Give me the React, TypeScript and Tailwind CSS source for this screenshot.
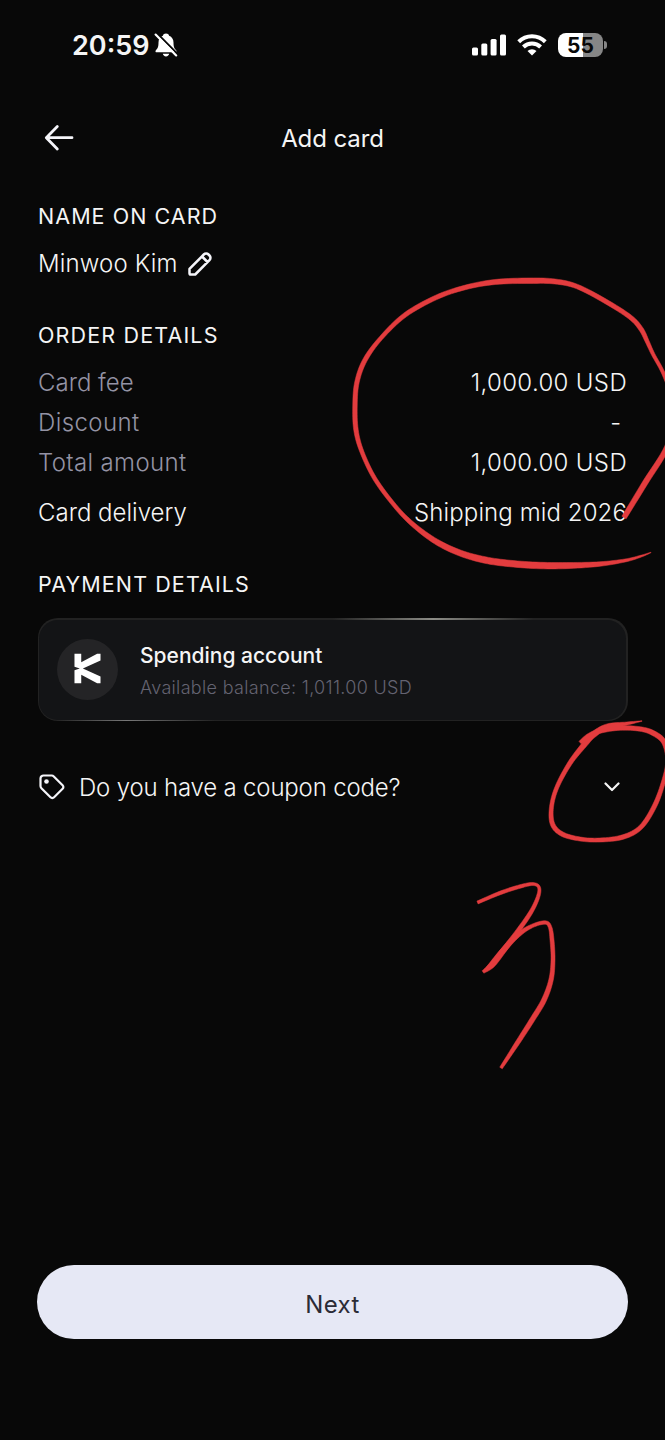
import { useMemo } from "react";

type Point = [x: number, y: number, width: number];

const ORDER_CIRCLE: Point[] = [
    [651, 552.5, 0.5], [640, 556.5, 2], [625, 560.5, 3], [600, 564, 4.5], [570, 565.5, 6], [540, 565.5, 6.5],
    [510, 563.5, 6.5], [485, 560, 6.5], [460, 553, 6], [436, 541.5, 5.5], [413, 524.5, 4.5], [395, 506, 4],
    [375, 479, 4], [362, 452, 4], [356, 430, 4.5], [355, 405, 4.5], [357, 382, 4.5], [365, 360, 4.5],
    [381, 338, 4], [405, 315, 4.5], [436, 297.5, 4.5], [465, 287.5, 4.5], [495, 282, 5], [530, 280.7, 5.5],
    [555, 281.5, 5], [577, 286.5, 4.5], [605, 301, 4.5], [630, 317, 4.5], [641, 329, 4.5], [647, 341, 4],
    [653, 354, 3.5], [665, 377, 3.5], [676, 412, 4], [667, 447, 5], [645, 483, 5.5], [624, 517.5, 5],
];

const CHEVRON_CIRCLE: Point[] = [
    [642, 721, 0.5], [627, 723.5, 3], [607, 726.5, 5], [593, 735, 6], [584, 745, 5.5], [570, 763, 4.5],
    [557, 787, 4], [551.5, 807, 4], [552.5, 824, 4.5], [562, 834, 4.5], [580, 839, 4], [600, 840, 4],
    [623, 837, 4.5], [641, 827, 4.5], [655, 805, 4.5], [664, 780, 4], [668, 760, 4.5], [664, 742, 5],
    [653, 733, 5], [640, 729, 4.5], [620, 728, 4.5], [600, 731, 4.5], [588, 736, 4], [580, 742.5, 3],
];

const THREE_TOP: Point[] = [
    [477.5, 902.5, 3], [500, 893, 3.5], [520, 886.5, 3.5], [533, 884, 3], [539, 887.5, 3], [538, 897, 3.5],
    [531, 912, 4], [518, 931, 4.5], [503, 951, 5.5], [492, 965, 5.5], [483, 972, 3],
];

const THREE_BOTTOM: Point[] = [
    [486, 970, 3], [502, 951.5, 5], [518, 935, 4.5], [532, 926, 3.5], [545, 922.5, 3.5], [550, 927, 3.5],
    [552, 940, 4], [553, 960, 4], [551, 980, 4.5], [544, 1000, 5], [533, 1018.5, 5], [518, 1042, 4.5], [501, 1068, 3],
];

// Catmull-Rom through the points, offset on both sides by half the width
function inkPath(points: Point[]) {
    const samples: Point[] = [];
    const steps = 8;
    for (let i = 0; i < points.length - 1; i++) {
        const p0 = points[Math.max(i - 1, 0)];
        const p1 = points[i];
        const p2 = points[i + 1];
        const p3 = points[Math.min(i + 2, points.length - 1)];
        for (let s = 0; s < steps; s++) {
            const t = s / steps;
            samples.push(
                [0, 1, 2].map(
                    (k) =>
                        0.5 *
                        (2 * p1[k] +
                            (p2[k] - p0[k]) * t +
                            (2 * p0[k] - 5 * p1[k] + 4 * p2[k] - p3[k]) * t * t +
                            (3 * p1[k] - p0[k] - 3 * p2[k] + p3[k]) * t * t * t),
                ) as Point,
            );
        }
    }
    samples.push(points[points.length - 1]);

    const left: string[] = [];
    const right: string[] = [];
    samples.forEach(([x, y, w], i) => {
        const a = samples[Math.max(i - 1, 0)];
        const b = samples[Math.min(i + 1, samples.length - 1)];
        const len = Math.hypot(b[0] - a[0], b[1] - a[1]) || 1;
        const nx = ((a[1] - b[1]) / len) * (w / 2);
        const ny = ((b[0] - a[0]) / len) * (w / 2);
        left.push(`${(x + nx).toFixed(2)} ${(y + ny).toFixed(2)}`);
        right.unshift(`${(x - nx).toFixed(2)} ${(y - ny).toFixed(2)}`);
    });
    return `M${[...left, ...right].join("L")}Z`;
}

function Ink({ points }: { points: Point[] }) {
    const d = useMemo(() => inkPath(points), [points]);
    return <path d={d} fill="#e33c3e" stroke="#e33c3e" strokeWidth="0.5" strokeLinejoin="round" />;
}

function StatusBar() {
    return (
        <div className="flex h-[90px] items-center justify-between pl-[72px] pr-[58px]">
            <div className="flex items-center gap-1">
                <span className="w-[78px] pt-0.5 text-[27px] leading-8 font-semibold tracking-[0px] whitespace-nowrap">20:59</span>
                <svg className="h-[26px] w-6" viewBox="0 0 24 26" fill="none">
                    <path
                        d="M12 1.5c-1.6 0-2.8.9-3.1 2.2C6 4.9 4.5 7.3 4.5 10.5c0 4.7-.9 6-2.6 7.7-.8.8-.6 2.1.9 2.1h18.4c1.5 0 1.7-1.3.9-2.1-1.7-1.7-2.6-3-2.6-7.7 0-3.2-1.5-5.6-4.4-6.8C14.8 2.4 13.6 1.500 12 1.500z"
                        fill="#fff"
                    />
                    <path d="M8.8 21.8h6.4c-.3 1.5-1.5 2.6-3.2 2.6s-2.9-1.1-3.2-2.600z" fill="#fff" />
                    <path d="M3.2 1.500l20.500 20.500" stroke="#080808" strokeWidth="2" />
                    <path d="M1.600 2.600l20.600 20.800" stroke="#fff" strokeWidth="2.200" strokeLinecap="round" />
                </svg>
            </div>
            <div className="flex items-center">
                <svg className="h-[22px] w-[34px]" viewBox="0 0 34 22" fill="#fff">
                    <rect x="0" y="13.5" width="6" height="8" rx="1.5" />
                    <rect x="9.3" y="9.5" width="6" height="12" rx="1.5" />
                    <rect x="18.6" y="5" width="6" height="16.5" rx="1.5" />
                    <rect x="28" y="0.5" width="6" height="21" rx="1.5" />
                </svg>
                <svg className="ml-[11px] h-[22px] w-[30px]" viewBox="0 0 30 22" fill="none" stroke="#fff">
                    <path d="M1.700 7.700a19 19 0 0 1 26.600 0" strokeWidth="4" />
                    <path d="M6.400 13a12.300 12.300 0 0 1 17.200 0" strokeWidth="4" />
                    <path d="M15 21.500l-4.500-4.500a6.400 6.400 0 0 1 9 0z" fill="#fff" stroke="none" />
                </svg>
                <div className="ml-[11px] flex h-6 w-[45px] items-center justify-center rounded-[8px] bg-linear-to-r from-white from-55% to-[#868686] to-55% pt-px text-[21px] leading-6 font-bold text-[#080808]">
                    55
                </div>
                <div className="ml-px h-2 w-[3px] rounded-r-full bg-[#868686]" />
            </div>
        </div>
    );
}

function OrderRow({ label, value }: { label: string; value: string }) {
    return (
        <div className="flex h-10 items-center justify-between">
            <span className="text-[#9493a4]">{label}</span>
            <span className="tracking-[0.35px]">{value}</span>
        </div>
    );
}

export default function App() {
    return (
        <div className="relative flex h-[1440px] w-[665px] flex-col overflow-hidden bg-[#080808] font-['Inter','Liberation_Sans',sans-serif] text-[#f5f5f5]">
            <StatusBar />
            <header className="grid h-24 grid-cols-3 items-center px-11">
                <svg className="h-7 w-[30px]" viewBox="0 0 30 28" fill="none" stroke="#f5f5fa" strokeWidth="2.8" strokeLinecap="round" strokeLinejoin="round">
                    <path d="M28 13.700H2.500M13.300 2.500L2.300 13.700l11 11.200" />
                </svg>
                <h1 className="pt-0.5 text-center text-[24px] tracking-[-0.1px]">Add card</h1>
            </header>

            <main className="flex flex-col px-[38px] pt-3.5 text-[24px] font-light">
                <h2 className="h-8 text-[21.5px] leading-8 font-normal tracking-[1.05px]">NAME ON CARD</h2>
                <div className="mt-3 flex h-10 items-center gap-2.5">
                    <span className="tracking-[0.15px]">Minwoo Kim</span>
                    <svg className="mb-px h-6 w-6" viewBox="0 0 24 24" fill="none" stroke="#f5f5fa" strokeWidth="2.5" strokeLinejoin="round">
                        <path d="M1.500 16.800L15.800 2.500a3.300 3.300 0 0 1 4.700 0l1 1a3.300 3.300 0 0 1 0 4.700L7.200 22.500H2.800a1.300 1.300 0 0 1-1.300-1.300zM14 4.500l5.500 5.500" />
                    </svg>
                </div>

                <h2 className="mt-[35px] h-8 text-[21.5px] leading-8 font-normal tracking-[1.15px]">ORDER DETAILS</h2>
                <div className="mt-3">
                    <OrderRow label="Card fee" value="1,000.00 USD" />
                    <div className="flex h-10 items-center justify-between">
                        <span className="tracking-[0.4px] text-[#9493a4]">Discount</span>
                        <span className="pr-1.5">-</span>
                    </div>
                    <div className="flex h-10 items-center justify-between tracking-[0.35px]">
                        <span className="text-[#9493a4]">Total amount</span>
                        <span>1,000.00 USD</span>
                    </div>
                </div>
                <div className="mt-2.5 flex h-10 items-center justify-between">
                    <span>Card delivery</span>
                    <span className="tracking-[0.1px]">Shipping mid 2026</span>
                </div>

                <h2 className="mt-[35px] h-8 text-[21.5px] leading-8 font-normal tracking-[1.1px]">PAYMENT DETAILS</h2>
                {/* The outer box is the glowing edge around the card */}
                <div className="-mx-[0.5px] mt-[18px] h-[103px] rounded-[20px] bg-[#222222] bg-[linear-gradient(90deg,transparent_50%,#8c8c86_67%,transparent_84%),linear-gradient(90deg,transparent_3%,#777_15%,transparent_30%)] bg-[length:100%_3px,100%_3px] bg-[position:top,bottom] bg-no-repeat p-[1.5px]">
                    <div className="flex h-full items-center rounded-[18.5px] bg-[#131416] pl-[18px]">
                        <div className="flex size-[61px] items-center justify-center rounded-full bg-[#242426]">
                            <svg className="mb-0.5 h-[31px] w-[27px]" viewBox="0 0 28 32" fill="#fff">
                                <path d="M.5.8h7v8.700L24 .8h3.500v7L9.200 16l18.300 8.200v7H24l-16.500-8.700v8.700h-7V17.800L6 16 .5 14.200z" />
                            </svg>
                        </div>
                        <div className="ml-[22px] pt-1">
                            <p className="text-[21px] leading-8 font-medium">Spending account</p>
                            <p className="text-[18px] leading-8 tracking-[0.32px] text-[#646371]">Available balance: 1,011.00 USD</p>
                        </div>
                    </div>
                </div>

                <div className="mt-[46px] flex h-10 items-center">
                    <svg className="ml-px h-[26px] w-[26px]" viewBox="0 0 26 26" fill="none" stroke="#f5f5fa" strokeWidth="2.2" strokeLinejoin="round">
                        <path d="M1.500 4.500a3 3 0 0 1 3-3h8.200a3 3 0 0 1 2.100.9l8.800 8.800a2.500 2.500 0 0 1 0 3.600l-8.500 8.500a2.500 2.500 0 0 1-3.600 0l-9.100-9.100a3 3 0 0 1-.9-2.100z" />
                        <circle cx="7.5" cy="7.5" r="2.3" fill="#f5f5fa" stroke="none" />
                    </svg>
                    <span className="ml-3.5 pt-px tracking-[-0.18px]">Do you have a coupon code?</span>
                    <svg className="mr-[7px] ml-auto h-4 w-4" viewBox="0 0 16 16" fill="none" stroke="#f5f5f5" strokeWidth="2.2" strokeLinecap="round" strokeLinejoin="round">
                        <path d="M1.500 4.500L8 11l6.500-6.500" />
                    </svg>
                </div>
            </main>

            <div className="mt-auto px-[37px] pb-[101px]">
                <button className="h-[74px] w-full rounded-full bg-[#e6e8f5] pt-1.5 text-[24px] tracking-[0.4px] text-[#2b2b36]">Next</button>
            </div>

            {/* Red marker notes over the screen */}
            <svg className="pointer-events-none absolute inset-0 h-[1440px] w-[665px]" viewBox="0 0 665 1440">
                <Ink points={ORDER_CIRCLE} />
                <Ink points={CHEVRON_CIRCLE} />
                <Ink points={THREE_TOP} />
                <Ink points={THREE_BOTTOM} />
            </svg>
        </div>
    );
}
